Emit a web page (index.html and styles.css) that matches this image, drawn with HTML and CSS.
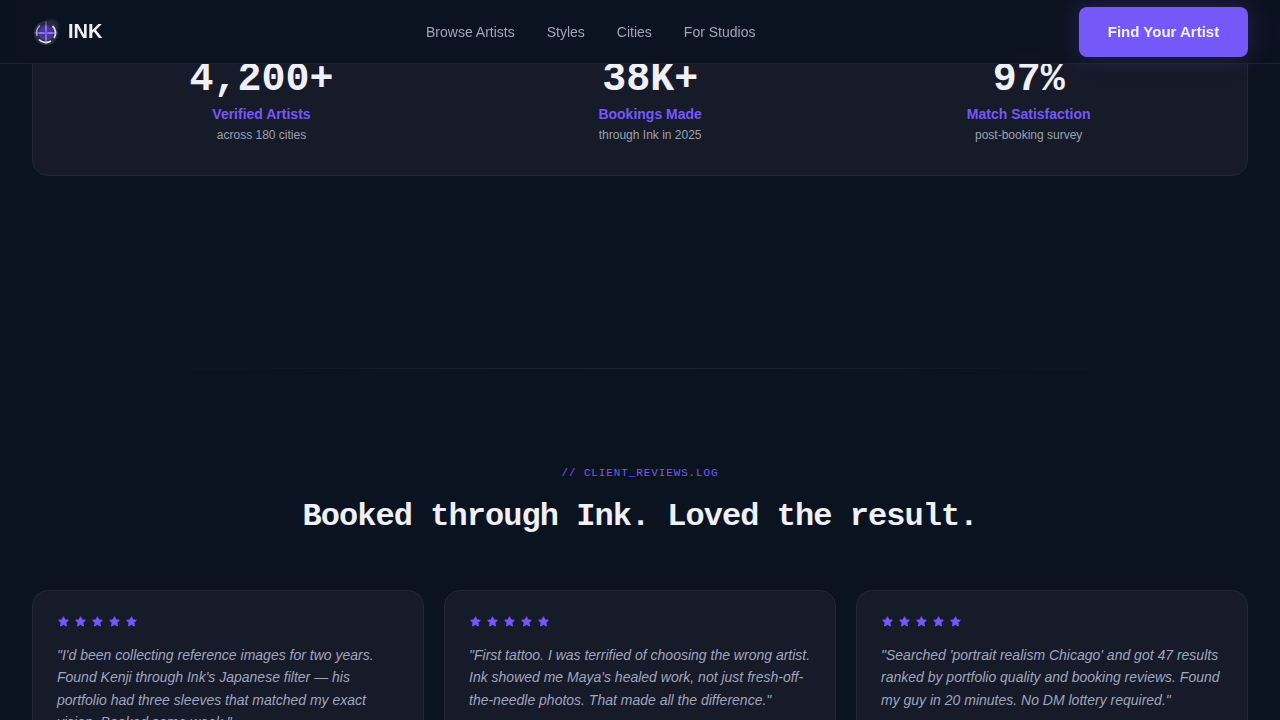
FILE: index.html
```html
<!DOCTYPE html>
<html lang="en">
<head>
    <meta charset="UTF-8">
    <meta name="viewport" content="width=device-width, initial-scale=1.0">
    <title>Ink</title>
    <link rel="stylesheet" href="styles.css">
</head>
<body>

<svg class="sprite" width="0" height="0">
    <defs>
        <symbol id="star" viewBox="0 0 24 24">
            <path d="M12 1.5l3.2 6.9 7.5.9-5.5 5.2 1.4 7.5-6.6-3.7-6.6 3.7 1.4-7.5L1.3 9.3l7.5-.9z" stroke="currentColor" stroke-width="2" stroke-linejoin="round" fill="currentColor"/>
        </symbol>
        <filter id="soft"><feGaussianBlur stdDeviation="0.45"/></filter>
        <filter id="softer"><feGaussianBlur stdDeviation="1.6"/></filter>
    </defs>
</svg>

<nav class="nav">
    <a class="brand">
        <svg class="brand-logo" width="28" height="28" viewBox="0 0 28 28">
            <circle cx="20" cy="8" r="6.5" fill="#3d4054" opacity="0.6" filter="url(#softer)"/>
            <g filter="url(#soft)">
                <circle cx="14" cy="15" r="12" fill="#2b2a4a"/>
                <circle cx="14" cy="15" r="7.5" fill="#4a34a0"/>
                <path d="M20.5 8 A9.5 9.5 0 0 1 22 20" fill="none" stroke="#dcd8ee" stroke-width="1.8"/>
                <path d="M19 23 A9.5 9.5 0 0 1 7 21.5" fill="none" stroke="#e8e5f4" stroke-width="1.8"/>
                <path d="M5.2 18 A9.5 9.5 0 0 1 8 7.5" fill="none" stroke="#a8a4c4" stroke-width="1.6"/>
                <path d="M14 1 L14.9 14.1 L27 15 L14.9 15.9 L14 28 L13.1 15.9 L1 15 L13.1 14.1 Z" fill="#b9aef0"/>
                <path d="M14 8 L15 14 L20 15 L15 16 L14 22 L13 16 L8 15 L13 14 Z" fill="#7a5ce0"/>
            </g>
        </svg>
        <span>INK</span>
    </a>
    <div class="nav-links">
        <a>Browse Artists</a>
        <a>Styles</a>
        <a>Cities</a>
        <a>For Studios</a>
    </div>
    <a class="nav-cta">Find Your Artist</a>
</nav>

<section class="stats">
    <div class="stat">
        <div class="stat-num">4,200+</div>
        <div class="stat-label">Verified Artists</div>
        <div class="stat-note">across 180 cities</div>
    </div>
    <div class="stat">
        <div class="stat-num">38K+</div>
        <div class="stat-label">Bookings Made</div>
        <div class="stat-note">through Ink in 2025</div>
    </div>
    <div class="stat">
        <div class="stat-num">97%</div>
        <div class="stat-label">Match Satisfaction</div>
        <div class="stat-note">post-booking survey</div>
    </div>
</section>

<div class="divider"></div>

<section class="reviews">
    <div class="eyebrow">// CLIENT_REVIEWS.LOG</div>
    <h2 class="reviews-title">Booked through Ink. Loved the result.</h2>
    <div class="review-grid">
        <div class="review">
            <div class="stars">
                <svg><use href="#star"/></svg><svg><use href="#star"/></svg><svg><use href="#star"/></svg><svg><use href="#star"/></svg><svg><use href="#star"/></svg>
            </div>
            <p>"I'd been collecting reference images for two years. Found Kenji through Ink's Japanese filter — his portfolio had three sleeves that matched my exact vision. Booked same week."</p>
        </div>
        <div class="review">
            <div class="stars">
                <svg><use href="#star"/></svg><svg><use href="#star"/></svg><svg><use href="#star"/></svg><svg><use href="#star"/></svg><svg><use href="#star"/></svg>
            </div>
            <p>"First tattoo. I was terrified of choosing the wrong artist. Ink showed me Maya's healed work, not just fresh-off-the-needle photos. That made all the difference."</p>
        </div>
        <div class="review">
            <div class="stars">
                <svg><use href="#star"/></svg><svg><use href="#star"/></svg><svg><use href="#star"/></svg><svg><use href="#star"/></svg><svg><use href="#star"/></svg>
            </div>
            <p>"Searched 'portrait realism Chicago' and got 47 results ranked by portfolio quality and booking reviews. Found my guy in 20 minutes. No DM lottery required."</p>
        </div>
    </div>
</section>

</body>
</html>
```

FILE: styles.css
```css
html, body {
    height: 720px;
    overflow: hidden;
}
body {
    margin: 0;
    background: #0c1320;
    font-family: "Liberation Sans", Arial, sans-serif;
    color: #eef0fa;
}
.sprite {
    position: absolute;
}
.nav {
    position: fixed;
    top: 0;
    left: 0;
    right: 0;
    z-index: 10;
    box-sizing: border-box;
    height: 64px;
    padding: 0 32px;
    display: flex;
    align-items: center;
    justify-content: space-between;
    background: rgba(12, 18, 32, 0.92);
    border-bottom: 1px solid #1c2230;
    backdrop-filter: blur(12px);
}
.brand {
    display: flex;
    align-items: center;
    gap: 8px;
    font-size: 20px;
    font-weight: 700;
}
.brand-logo {
    display: block;
}
.nav-links {
    display: flex;
    gap: 32px;
    font-size: 14px;
    color: #a0a6b8;
}
.nav-cta {
    width: 169px;
    height: 50px;
    display: flex;
    align-items: center;
    justify-content: center;
    background: #7559f8;
    border-radius: 8px;
    font-size: 15px;
    font-weight: 700;
    box-shadow: 0 0 24px rgba(108, 92, 231, 0.25);
}
.stats {
    box-sizing: border-box;
    height: 216px;
    margin: -40px 32px 0;
    padding: 105px 24px 0;
    display: flex;
    justify-content: space-around;
    background: #161a29;
    border: 1px solid #222736;
    border-radius: 16px;
    text-align: center;
}
.stat-num {
    font-family: "Liberation Mono", monospace;
    font-size: 40px;
    font-weight: 700;
    line-height: 28px;
}
.stat-label {
    margin-top: 10px;
    font-size: 14px;
    font-weight: 700;
    line-height: 20px;
    color: #7559f8;
}
.stat-note {
    margin-top: 2px;
    font-size: 12px;
    line-height: 18px;
    color: #9ca3af;
}
.divider {
    height: 1px;
    margin: 192px 140px 0;
    background: linear-gradient(90deg, transparent, #1e2433, transparent);
}
.reviews {
    padding: 96px 32px 0;
    text-align: center;
}
.eyebrow {
    font-family: "Liberation Mono", monospace;
    font-size: 11px;
    line-height: 16px;
    letter-spacing: 0.08em;
    color: #7559f8;
}
.reviews-title {
    margin: 16px 0 0;
    font-family: "Liberation Mono", monospace;
    font-size: 32px;
    font-weight: 700;
    line-height: 40px;
    letter-spacing: -0.03em;
}
.review-grid {
    margin-top: 53px;
    display: grid;
    grid-template-columns: repeat(3, 1fr);
    gap: 20px;
    text-align: left;
}
.review {
    padding: 24px;
    height: 200px;
    background: #161a29;
    border: 1px solid #222736;
    border-radius: 16px;
}
.stars {
    display: flex;
    align-items: center;
    gap: 6px;
    height: 12px;
    margin-left: 1px;
    color: #7559f8;
}
.stars svg {
    width: 11px;
    height: 11px;
}
.review p {
    margin: 17px 0 0;
    font-size: 14px;
    font-style: italic;
    line-height: 22.4px;
    color: #a0a6bd;
}
```
